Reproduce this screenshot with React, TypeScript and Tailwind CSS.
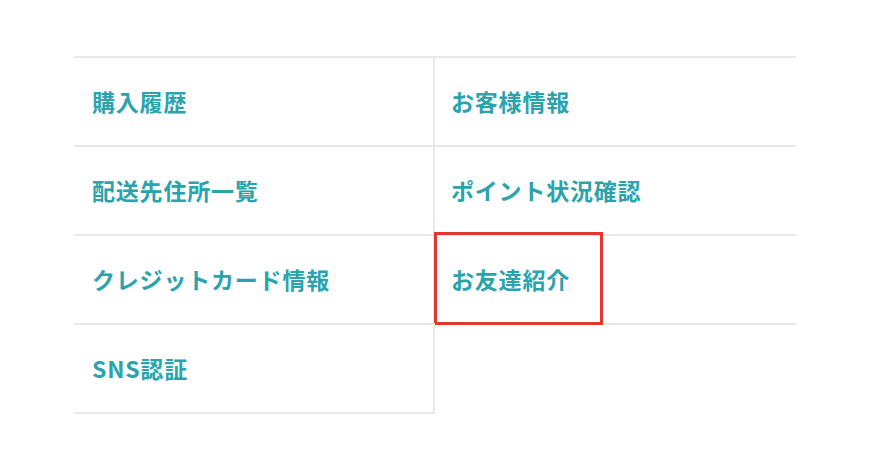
const items: { label: string; highlight?: boolean }[] = [
  { label: "購入履歴" },
  { label: "お客様情報" },
  { label: "配送先住所一覧" },
  { label: "ポイント状況確認" },
  { label: "クレジットカード情報" },
  { label: "お友達紹介", highlight: true },
  { label: "SNS認証" },
];

export default function App() {
  return (
    <div
      className="w-[895px] h-[466px] bg-white overflow-hidden"
      style={{ fontFamily: '"Noto Sans CJK JP", "Noto Sans", sans-serif' }}
    >
      <div className="ml-[74px] mt-[56px] w-[722px] grid grid-cols-2">
        {items.map((item, i) => {
          const left = i % 2 === 0;
          const last = i === items.length - 1;
          return (
            <div
              key={item.label}
              className={`relative h-[89px] border-t-2 border-[#e8e8e8] flex items-center ${
                left ? "border-r-2 pl-[18px]" : "pl-[16px]"
              } ${last ? "h-[91px] border-b-2" : ""}`}
            >
              <span className="text-[23px] font-bold text-[#2aa3ad] tracking-[0.8px]">
                {item.label}
              </span>
              {item.highlight && (
                <div className="absolute -top-[4px] -left-[1px] w-[169px] h-[93px] border-[3px] border-[#e2372f]" />
              )}
            </div>
          );
        })}
        <div className="h-[89px] border-t-2 border-[#e8e8e8]" />
      </div>
    </div>
  );
}
